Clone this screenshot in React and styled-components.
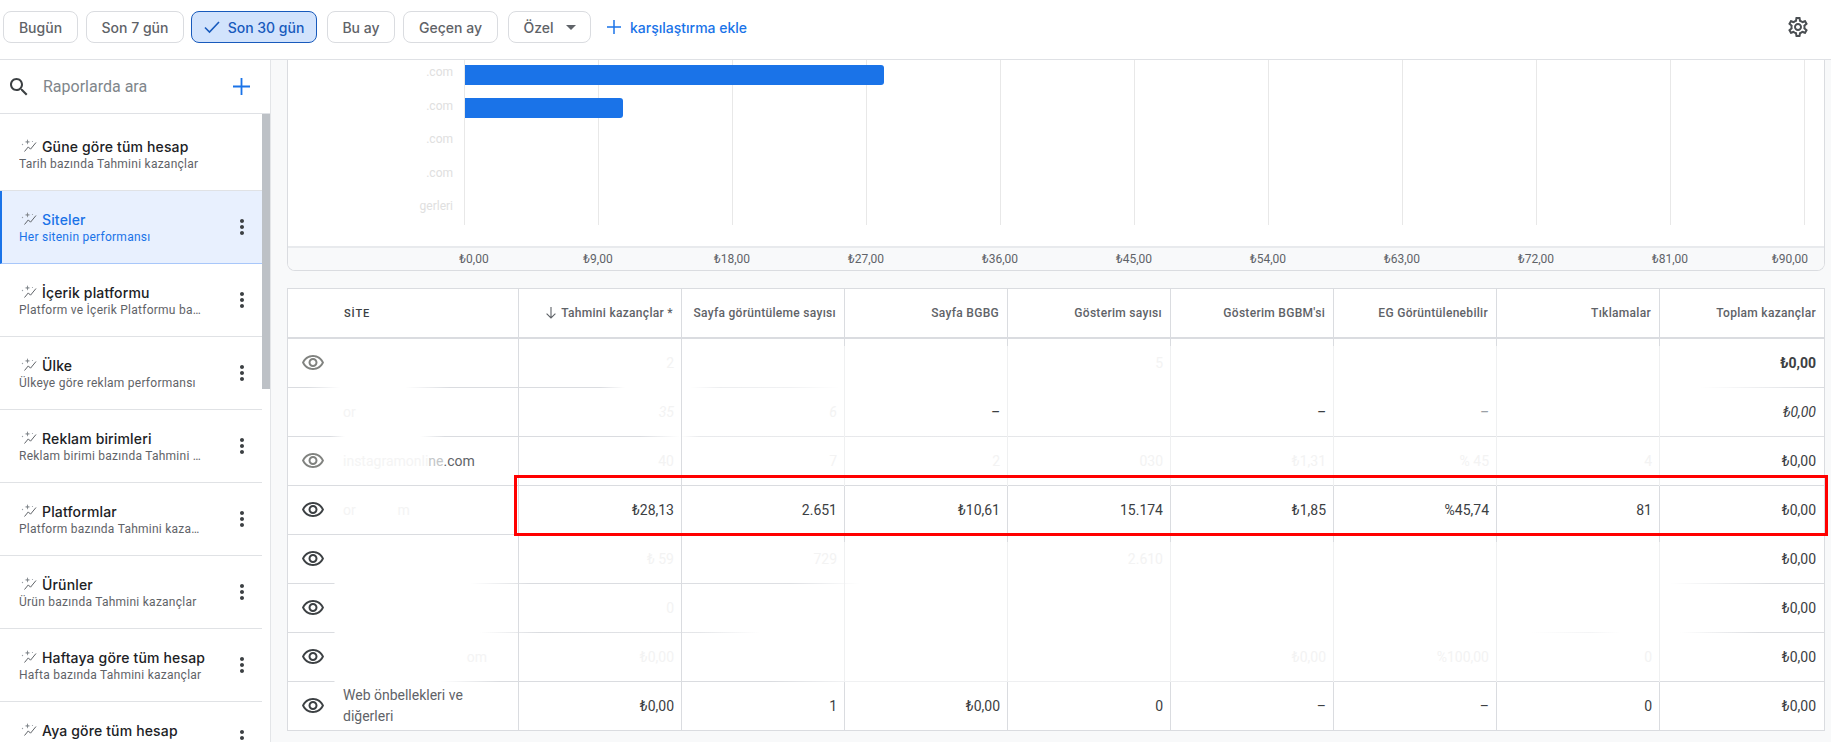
import React from 'react';
import styled, { createGlobalStyle } from 'styled-components';

const GlobalStyle = createGlobalStyle`
  html, body {
    margin: 0;
    padding: 0;
    height: 100%;
    overflow: hidden;
    background: #fff;
    font-family: Roboto, "Liberation Sans", sans-serif;
  }
  * { box-sizing: border-box; }
`;

const LINE = '#dadce0';
const TITLE_FONT = 'Inter, Roboto, sans-serif';

// top bar
const Page = styled.div`
  width: 1831px;
  height: 742px;
  display: flex;
  flex-direction: column;
  overflow: hidden;
`;

const Toolbar = styled.div`
  height: 60px;
  flex: none;
  display: flex;
  align-items: flex-start;
  padding: 11px 21px 0 3px;
  border-bottom: 1px solid #dfe1e5;
`;

const RangeButton = styled.div`
  width: ${p => p.$w}px;
  height: 32px;
  margin-left: ${p => p.$gap}px;
  flex: none;
  display: flex;
  align-items: center;
  justify-content: center;
  gap: ${p => (p.$selected ? 8 : 12)}px;
  border: 1px solid ${p => (p.$selected ? '#185abc' : LINE)};
  border-radius: 8px;
  background: ${p => (p.$selected ? '#d2e3fc' : '#fff')};
  color: ${p => (p.$selected ? '#185abc' : '#5f6368')};
  font-family: ${TITLE_FONT};
  font-size: 14px;
  font-weight: 500;
`;

const Caret = styled.span`
  width: 0;
  height: 0;
  border-left: 5px solid transparent;
  border-right: 5px solid transparent;
  border-top: 5px solid #5f6368;
`;

const AddCompare = styled.div`
  height: 32px;
  margin-left: 16px;
  display: flex;
  align-items: center;
  gap: 9px;
  color: #1a73e8;
  font-family: ${TITLE_FONT};
  font-size: 14px;
  font-weight: 500;
`;

const Settings = styled.div`
  margin-left: auto;
  height: 32px;
  display: flex;
  align-items: center;
  color: #4a4e52;
`;

const Body = styled.div`
  flex: 1;
  min-height: 0;
  display: flex;
  background: #f8f9fa;
`;

// left list
const Sidebar = styled.aside`
  width: 271px;
  flex: none;
  display: flex;
  flex-direction: column;
  background: #fff;
  border-right: 1px solid #e3e5e8;
`;

const SearchRow = styled.div`
  height: 54px;
  flex: none;
  display: flex;
  align-items: center;
  padding: 0 20px 0 7px;
  border-bottom: 1px solid #dfe1e5;
  color: #3c4043;
`;

const SearchText = styled.span`
  margin-left: 12px;
  flex: 1;
  font-size: 16px;
  color: #80868b;
`;

const ReportList = styled.div`
  position: relative;
  flex: 1;
  min-height: 0;
  overflow: hidden;
  padding: 4px 8px 0 0;
`;

const ScrollThumb = styled.div`
  position: absolute;
  top: 0;
  right: 0;
  width: 8px;
  height: 275px;
  background: #bdc1c6;
`;

const ReportItem = styled.div`
  height: 73px;
  display: flex;
  justify-content: space-between;
  align-items: center;
  padding: 0 8px 0 ${p => (p.$active ? 17 : 19)}px;
  border-left: ${p => (p.$active ? '2px solid #1a73e8' : 'none')};
  border-bottom: 1px solid ${p => (p.$active ? '#a8c7fa' : '#e0e2e5')};
  background: ${p => (p.$active ? '#e8f0fe' : '#fff')};
  color: #3c4043;
`;

const ReportText = styled.div`
  align-self: flex-start;
  padding-top: 18px;
  width: 186px;
  min-width: 0;
`;

const ReportTitle = styled.div`
  display: flex;
  align-items: center;
  gap: 5px;
  height: 20px;
  margin-left: 2px;
  font-family: ${TITLE_FONT};
  font-size: 14px;
  font-weight: 500;
  letter-spacing: 0.15px;
  white-space: nowrap;
  color: ${p => (p.$active ? '#1a73e8' : '#202124')};
`;

const ReportSub = styled.div`
  height: 16px;
  line-height: 16px;
  font-size: 12px;
  letter-spacing: 0.25px;
  white-space: nowrap;
  overflow: hidden;
  text-overflow: ellipsis;
  color: ${p => (p.$active ? '#1a73e8' : '#5f6368')};
`;

// right side
const Main = styled.main`
  flex: 1;
  min-width: 0;
  padding: 0 6px 0 16px;
`;

const ChartCard = styled.section`
  background: #fff;
  border: 1px solid ${LINE};
  border-top: none;
  border-radius: 0 0 8px 8px;
  overflow: hidden;
`;

const Plot = styled.div`
  height: 186px;
  display: flex;
  align-items: flex-start;
`;

const LabelColumn = styled.div`
  width: 176px;
  flex: none;
  display: flex;
  flex-direction: column;
  gap: 9.5px;
  padding-right: 11px;
`;

const BarLabel = styled.div`
  height: 24px;
  line-height: 24px;
  text-align: right;
  font-size: 12px;
  color: #e0e0e0;
`;

const BarColumn = styled.div`
  width: 1341px;
  height: 165px;
  flex: none;
  display: flex;
  flex-direction: column;
  gap: 13px;
  padding: 5px 0 0 1px;
  background: repeating-linear-gradient(90deg, #e8e8e8 0 1px, transparent 1px 134px);
`;

const Bar = styled.div`
  height: 20px;
  flex: none;
  background: #1a73e8;
  border-radius: 0 3px 3px 0;
`;

const AxisBand = styled.div`
  height: 24px;
  display: flex;
  align-items: center;
  padding-left: 109px;
  background: #f8f9fa;
  border-top: 2px solid #e8eaed;
`;

const AxisLabel = styled.span`
  width: 134px;
  flex: none;
  text-align: center;
  font-size: 12px;
  color: #5f6368;
  transform: translateX(${p => p.$shift || 0}px);
`;

const TableWrap = styled.section`
  position: relative;
  margin-top: 17px;
  background: #fff;
  border: 1px solid ${LINE};
  border-bottom: none;
`;

const HeaderRow = styled.div`
  height: 50px;
  display: grid;
  grid-template-columns: 231px repeat(7, 163px) 1fr;
  border-bottom: 2px solid ${LINE};
`;

const HeaderCell = styled.div`
  display: flex;
  align-items: center;
  justify-content: flex-end;
  gap: 5px;
  padding-right: 8px;
  font-size: 12px;
  font-weight: 500;
  letter-spacing: 0.3px;
  color: #5f6368;
  border-right: ${p => (p.$last ? 'none' : `1px solid ${LINE}`)};
`;

const SiteHeader = styled(HeaderCell)`
  justify-content: flex-start;
  padding-left: 56px;
  font-size: 11px;
  letter-spacing: 0.9px;
  color: #3c4043;
`;

const Row = styled.div`
  height: 49px;
  display: grid;
  grid-template-columns: 231px repeat(7, 163px) 1fr;
  background: ${p => p.$line} bottom / 100% 1px no-repeat;
`;

const Cell = styled.div`
  display: flex;
  align-items: center;
  justify-content: flex-end;
  padding: 0 8px 1px 0;
  font-size: 14px;
  color: ${p => (p.$ghost ? '#f3f3f3' : '#3c4043')};
  font-weight: ${p => (p.$bold ? 700 : 400)};
  font-style: ${p => (p.$italic ? 'italic' : 'normal')};
  background:
    ${p => (p.$stub ? `linear-gradient(${LINE}, ${LINE}) right top / 1px 7px no-repeat,` : '')}
    linear-gradient(${p => p.$edge}, ${p => p.$edge}) right top / 1px 100% no-repeat;
`;

const SiteCell = styled(Cell)`
  justify-content: flex-start;
  gap: 18px;
  padding: 0 0 1px 13px;
  background: linear-gradient(${LINE}, ${LINE}) right top / 1px 100% no-repeat;
`;

const EyeSlot = styled.div`
  width: 24px;
  height: 24px;
  flex: none;
  color: ${p => (p.$muted ? '#80827f' : '#3c4043')};
`;

const SiteName = styled.span`
  font-size: 14px;
  line-height: 21px;
  width: 150px;
  white-space: ${p => (p.$wrap ? 'normal' : 'pre')};
  text-align: ${p => (p.$right ? 'right' : 'left')};
  padding-right: ${p => (p.$right ? 6 : 0)}px;
  color: #5f6368;
`;

const Ghost = styled.span`
  color: ${p => p.$tone || '#f4f4f4'};
`;

const Highlight = styled.div`
  position: absolute;
  top: 186px;
  left: 226px;
  width: 1314px;
  height: 61px;
  border: 3px solid #ff0000;
  pointer-events: none;
`;

const Path = ({ size = 24, d }) => (
  <svg width={size} height={size} viewBox="0 0 24 24" fill="currentColor" style={{ display: 'block', flex: 'none' }}>
    <path d={d} />
  </svg>
);

const SEARCH = 'M15.5 14h-.79l-.28-.27C15.41 12.59 16 11.11 16 9.5 16 5.91 13.09 3 9.5 3S3 5.91 3 9.5 5.91 16 9.5 16c1.61 0 3.09-.59 4.23-1.57l.27.28v.79l5 4.99L20.49 19l-4.99-5zm-6 0C7.01 14 5 11.99 5 9.5S7.01 5 9.5 5 14 7.01 14 9.5 11.99 14 9.5 14z';
const EYE = 'M12 6c3.79 0 7.17 2.13 8.82 5.5C19.17 14.87 15.79 17 12 17s-7.17-2.13-8.82-5.5C4.83 8.13 8.21 6 12 6m0-2C7 4 2.73 7.11 1 11.5 2.73 15.89 7 19 12 19s9.27-3.11 11-7.5C21.27 7.11 17 4 12 4zm0 5c1.38 0 2.5 1.12 2.5 2.5S13.38 14 12 14s-2.5-1.12-2.5-2.5S10.62 9 12 9m0-2c-2.48 0-4.5 2.02-4.5 4.5S9.52 16 12 16s4.5-2.02 4.5-4.5S14.48 7 12 7z';
const DOTS = 'M12 8c1.1 0 2-.9 2-2s-.9-2-2-2-2 .9-2 2 .9 2 2 2zm0 2c-1.1 0-2 .9-2 2s.9 2 2 2 2-.9 2-2-.9-2-2-2zm0 6c-1.1 0-2 .9-2 2s.9 2 2 2 2-.9 2-2-.9-2-2-2z';
const GEAR = 'M19.43 12.98c.04-.32.07-.64.07-.98 0-.34-.03-.66-.07-.98l2.11-1.65c.19-.15.24-.42.12-.64l-2-3.46c-.09-.16-.26-.25-.44-.25-.06 0-.12.01-.17.03l-2.49 1c-.52-.4-1.08-.73-1.69-.98l-.38-2.65C14.46 2.18 14.25 2 14 2h-4c-.25 0-.46.18-.49.42l-.38 2.65c-.61.25-1.17.59-1.69.98l-2.49-1c-.06-.02-.12-.03-.18-.03-.17 0-.34.09-.43.25l-2 3.46c-.13.22-.07.49.12.64l2.11 1.65c-.04.32-.07.65-.07.98 0 .33.03.66.07.98l-2.11 1.65c-.19.15-.24.42-.12.64l2 3.46c.09.16.26.25.44.25.06 0 .12-.01.17-.03l2.49-1c.52.4 1.08.73 1.69.98l.38 2.65c.03.24.24.42.49.42h4c.25 0 .46-.18.49-.42l.38-2.65c.61-.25 1.17-.59 1.69-.98l2.49 1c.06.02.12.03.18.03.17 0 .34-.09.43-.25l2-3.46c.12-.22.07-.49-.12-.64l-2.11-1.65zm-1.98-1.71c.04.31.05.52.05.73 0 .21-.02.43-.05.73l-.14 1.13.89.7 1.08.84-.7 1.21-1.27-.51-1.04-.42-.9.68c-.43.32-.84.56-1.25.73l-1.06.43-.16 1.13-.2 1.35h-1.4l-.19-1.35-.16-1.13-1.06-.43c-.43-.18-.83-.41-1.23-.71l-.91-.7-1.06.43-1.27.51-.7-1.21 1.08-.84.89-.7-.14-1.13c-.03-.31-.05-.54-.05-.74s.02-.43.05-.73l.14-1.13-.89-.7-1.08-.84.7-1.21 1.27.51 1.04.42.9-.68c.43-.32.84-.56 1.25-.73l1.06-.43.16-1.13.2-1.35h1.39l.19 1.35.16 1.13 1.06.43c.43.18.83.41 1.23.71l.91.7 1.06-.43 1.27-.51.7 1.21-1.07.85-.89.7.14 1.13zM12 8c-2.21 0-4 1.79-4 4s1.79 4 4 4 4-1.79 4-4-1.79-4-4-4zm0 6c-1.1 0-2-.9-2-2s.9-2 2-2 2 .9 2 2-.9 2-2 2z';

const Check = () => (
  <svg width="16" height="14" viewBox="0 0 16 14" fill="none" stroke="currentColor" strokeWidth="1.6">
    <path d="M1 7.5l4.5 4.5L15 2" />
  </svg>
);

const Plus = ({ size }) => (
  <svg width={size} height={size} viewBox="0 0 16 16" fill="none" stroke="#1a73e8" strokeWidth="1.7" style={{ display: 'block', flex: 'none' }}>
    <path d="M8 0v16M0 8h16" />
  </svg>
);

const Sparkle = () => (
  <svg width="16" height="14" viewBox="0 0 16 14" fill="none" style={{ display: 'block', flex: 'none' }}>
    <path d="M3.5 12.5l3.8-4.6 2.2 2.3L15 3.5" stroke="#5f6368" strokeWidth="1" />
    <path d="M6.5 0l.7 2.2 2.2.7-2.2.7-.7 2.2-.7-2.2-2.2-.7 2.2-.7z" fill="#80868b" />
    <circle cx="1.5" cy="5.5" r=".7" fill="#9aa0a6" />
    <circle cx="11.5" cy="2.5" r=".6" fill="#9aa0a6" />
  </svg>
);

const SortArrow = () => (
  <svg width="10" height="12" viewBox="0 0 10 12" fill="none" stroke="#5f6368" strokeWidth="1.1">
    <path d="M5 0v11M.6 6.6L5 11l4.4-4.4" />
  </svg>
);

const ranges = [
  { label: 'Bugün', w: 75, gap: 0 },
  { label: 'Son 7 gün', w: 98, gap: 8 },
  { label: 'Son 30 gün', w: 126, gap: 7, selected: true },
  { label: 'Bu ay', w: 68, gap: 10 },
  { label: 'Geçen ay', w: 95, gap: 8 },
  { label: 'Özel', w: 83, gap: 10, caret: true },
];

const reports = [
  { title: 'Güne göre tüm hesap', sub: 'Tarih bazında Tahmini kazançlar', noMenu: true },
  { title: 'Siteler', sub: 'Her sitenin performansı', active: true },
  { title: 'İçerik platformu', sub: 'Platform ve İçerik Platformu bazında Tahmini kazançlar' },
  { title: 'Ülke', sub: 'Ülkeye göre reklam performansı' },
  { title: 'Reklam birimleri', sub: 'Reklam birimi bazında Tahmini kazançlar' },
  { title: 'Platformlar', sub: 'Platform bazında Tahmini kazançlar' },
  { title: 'Ürünler', sub: 'Ürün bazında Tahmini kazançlar' },
  { title: 'Haftaya göre tüm hesap', sub: 'Hafta bazında Tahmini kazançlar' },
  { title: 'Aya göre tüm hesap', sub: 'Ay bazında Tahmini kazançlar' },
];

const barLabels = ['.com', '.com', '.com', '.com', 'gerleri'];
const barWidths = [419, 158];
const ticks = ['₺0,00', '₺9,00', '₺18,00', '₺27,00', '₺36,00', '₺45,00', '₺54,00', '₺63,00', '₺72,00', '₺81,00', '₺90,00'];
const columns = ['Tahmini kazançlar *', 'Sayfa görüntüleme sayısı', 'Sayfa BGBG', 'Gösterim sayısı', "Gösterim BGBM'si", 'EG Görüntülenebilir', 'Tıklamalar', 'Toplam kazançlar'];

// builds a row's bottom line that fades out where the picture was smudged; stops are [x on page, strength]
const fadeLine = stops => {
  const parts = stops.map(([x, a]) => `rgba(218,220,224,${a}) ${x - 288}px`);
  return `linear-gradient(90deg, ${parts.join(', ')})`;
};

const rows = [
  {
    eye: 'muted', site: null, line: [[288, 1], [308, 1], [340, 0], [405, 0], [450, 1], [600, 1], [625, 0], [690, 0], [720, .5], [790, .4], [840, 0], [1700, 0], [1824, 1]],
    cells: [['2', 1], ['', 1], ['', 1], ['5', 1], ['', 1], ['', 1], ['', 1], ['₺0,00', 0, 'bold']],
  },
  {
    site: <Ghost>or</Ghost>, line: [[288, 1], [330, 1], [345, 0], [420, 0], [445, 1], [640, 1], [680, 0], [700, .6], [1824, .9]],
    italic: true, cells: [['35', 1], ['6', 1], ['–', 0], ['', 1], ['–', 0], ['–', 0, 'soft'], ['', 1], ['₺0,00', 0]],
  },
  {
    eye: 'muted', site: <><Ghost>instagramonli</Ghost><Ghost $tone="#c4c7c9">ne</Ghost>.com</>, line: [[288, 1], [1824, 1]],
    cells: [['40', 1], ['7', 1], ['2', 1], ['030', 1], ['₺1,31', 1], ['%  45', 1], ['4', 1], ['₺0,00', 0]],
  },
  {
    eye: 'dark', site: <Ghost>or            m</Ghost>, solid: true, line: [[288, 1], [1824, 1]],
    cells: [['₺28,13', 0], ['2.651', 0], ['₺10,61', 0], ['15.174', 0], ['₺1,85', 0], ['%45,74', 0], ['81', 0], ['₺0,00', 0]],
  },
  {
    eye: 'dark', site: null, line: [[288, 1], [334, 1], [335, 0], [470, 0], [530, 1], [790, .9], [860, 0], [1670, 0], [1770, 1], [1824, 1]],
    cells: [['₺ 59', 1], ['729', 1], ['', 1], ['2.610', 1], ['', 1], ['', 1], ['', 1], ['₺0,00', 0]],
  },
  {
    eye: 'dark', site: null, line: [[288, 1], [334, 1], [335, 0], [480, 0], [540, 1], [700, .7], [760, 0], [1530, 0], [1590, .3], [1620, 0], [1680, 0], [1760, 1], [1824, 1]],
    cells: [['0', 1], ['', 1], ['', 1], ['', 1], ['', 1], ['', 1], ['', 1], ['₺0,00', 0]],
  },
  {
    eye: 'dark', site: <Ghost>om</Ghost>, siteRight: true, line: [[288, 1], [334, 1], [335, 0], [440, 0], [500, 1], [770, 1], [840, .4], [1200, .5], [1300, .9], [1824, 1]],
    cells: [['₺0,00', 1], ['', 1], ['', 1], ['', 1], ['₺0,00', 1], ['%100,00', 1], ['0', 1], ['₺0,00', 0]],
  },
  {
    eye: 'dark', site: 'Web önbellekleri ve diğerleri', wrap: true, solid: true, line: [[288, 1], [1824, 1]],
    cells: [['₺0,00', 0], ['1', 0], ['₺0,00', 0], ['0', 0], ['–', 0], ['–', 0], ['0', 0], ['₺0,00', 0]],
  },
];

const App = () => {
  return (
    <Page>
      <GlobalStyle />
      <Toolbar>
        {ranges.map(r => (
          <RangeButton key={r.label} $w={r.w} $gap={r.gap} $selected={r.selected}>
            {r.selected && <Check />}
            {r.label}
            {r.caret && <Caret />}
          </RangeButton>
        ))}
        <AddCompare>
          <Plus size={14} />
          karşılaştırma ekle
        </AddCompare>
        <Settings>
          <Path d={GEAR} />
        </Settings>
      </Toolbar>

      <Body>
        <Sidebar>
          <SearchRow>
            <Path d={SEARCH} />
            <SearchText>Raporlarda ara</SearchText>
            <Plus size={17} />
          </SearchRow>
          <ReportList>
            <ScrollThumb />
            {reports.map(r => (
              <ReportItem key={r.title} $active={r.active}>
                <ReportText>
                  <ReportTitle $active={r.active}>
                    <Sparkle />
                    {r.title}
                  </ReportTitle>
                  <ReportSub $active={r.active}>{r.sub}</ReportSub>
                </ReportText>
                {!r.noMenu && <Path d={DOTS} />}
              </ReportItem>
            ))}
          </ReportList>
        </Sidebar>

        <Main>
          <ChartCard>
            <Plot>
              <LabelColumn>
                {barLabels.map((l, i) => (
                  <BarLabel key={i}>{l}</BarLabel>
                ))}
              </LabelColumn>
              <BarColumn>
                {barWidths.map(w => (
                  <Bar key={w} style={{ width: w }} />
                ))}
              </BarColumn>
            </Plot>
            <AxisBand>
              {ticks.map((t, i) => (
                <AxisLabel key={t} $shift={i === 0 ? 10 : i === ticks.length - 1 ? -14 : 0}>{t}</AxisLabel>
              ))}
            </AxisBand>
          </ChartCard>

          <TableWrap>
            <HeaderRow>
              <SiteHeader>SİTE</SiteHeader>
              {columns.map((c, i) => (
                <HeaderCell key={c} $last={i === columns.length - 1}>
                  {i === 0 && <SortArrow />}
                  {c}
                </HeaderCell>
              ))}
            </HeaderRow>
            {rows.map((row, ri) => (
              <Row key={ri} $line={fadeLine(row.line)}>
                <SiteCell>
                  <EyeSlot $muted={row.eye === 'muted'}>
                    {row.eye && <Path d={EYE} />}
                  </EyeSlot>
                  {row.site && <SiteName $wrap={row.wrap} $right={row.siteRight}>{row.site}</SiteName>}
                </SiteCell>
                {row.cells.map(([text, ghost, kind], ci) => {
                  const last = ci === row.cells.length - 1;
                  const edge = last ? 'transparent' : ci === 0 || row.solid ? LINE : '#eff0f1';
                  return (
                    <Cell
                      key={ci}
                      $ghost={ghost === 1}
                      $bold={kind === 'bold'}
                      $italic={row.italic}
                      $edge={edge}
                      $stub={!last && (ri === 0 || ri === 4)}
                    >
                      {kind === 'soft' ? <Ghost $tone="#9aa0a6">{text}</Ghost> : text}
                    </Cell>
                  );
                })}
              </Row>
            ))}
            <Highlight />
          </TableWrap>
        </Main>
      </Body>
    </Page>
  );
};

export default App;
